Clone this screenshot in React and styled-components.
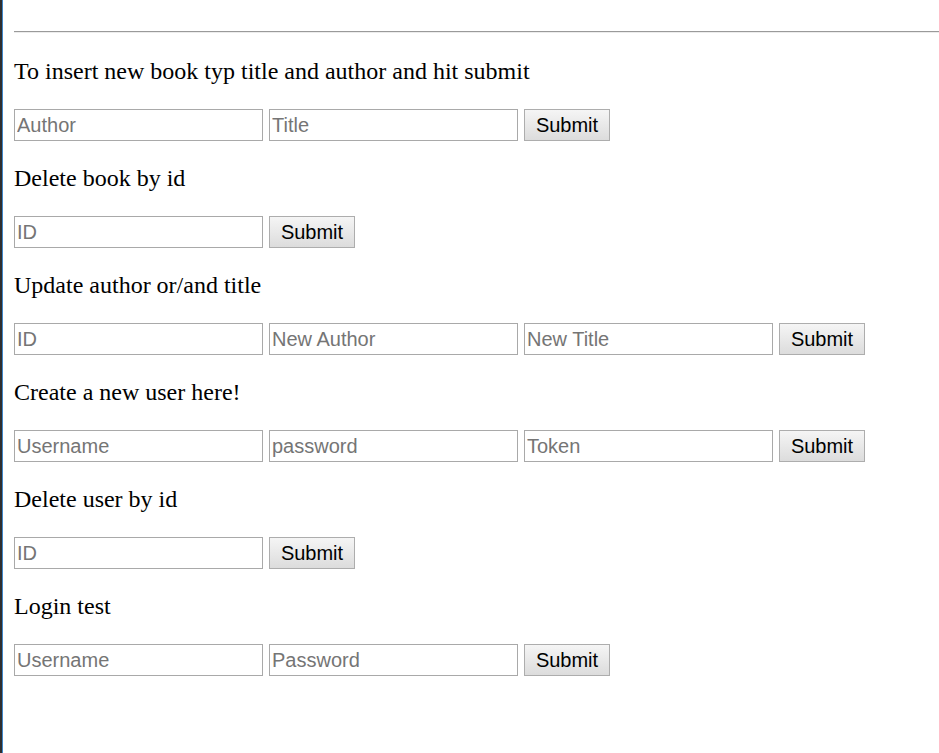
import React from 'react'
import styled, { createGlobalStyle } from 'styled-components'

const GlobalStyle = createGlobalStyle`
    html, body {
        margin: 0;
        padding: 0;
        background: #ffffff;
    }
    body {
        font-family: "Liberation Serif", "Times New Roman", serif;
    }
`

const Page = styled.div`
    min-height: 100vh;
    box-sizing: border-box;
    padding: 31px 0 0 14px;
    box-shadow: inset 2px 0 0 #2e2e30, inset 3px 0 0 #3f86c8;
`

const Rule = styled.hr`
    margin: 0;
    height: 0;
    border: none;
    border-top: 1px solid #9a9a9a;
    border-bottom: 1px solid #ececec;
`

const Forms = styled.div`
    display: flex;
    flex-direction: column;
    padding-top: 26px;
`

const Heading = styled.p`
    margin: 0;
    font-size: 24px;
    line-height: 24px;
    color: #000;
`

const Row = styled.div`
    display: flex;
    gap: 6px;
    margin: 26px 0 25px;
`

const Field = styled.input`
    box-sizing: border-box;
    width: 249px;
    height: 32px;
    margin: 0;
    padding: 0 2px;
    border: 1px solid #a9a9a9;
    border-radius: 0;
    font-family: "Liberation Sans", Arial, sans-serif;
    font-size: 20px;
    color: #000;
    background: #fff;
    outline: none;

    &::placeholder {
        color: #757575;
    }
`

const SubmitButton = styled.button`
    box-sizing: border-box;
    width: 86px;
    height: 32px;
    margin: 0;
    padding: 0;
    border: 1px solid #adadad;
    border-radius: 0;
    font-family: "Liberation Sans", Arial, sans-serif;
    font-size: 20px;
    color: #000;
    background: linear-gradient(#f5f5f5, #dcdcdc);
`

const sections = [
    { title: 'To insert new book typ title and author and hit submit', fields: ['Author', 'Title'] },
    { title: 'Delete book by id', fields: ['ID'] },
    { title: 'Update author or/and title', fields: ['ID', 'New Author', 'New Title'] },
    { title: 'Create a new user here!', fields: ['Username', 'password', 'Token'] },
    { title: 'Delete user by id', fields: ['ID'] },
    { title: 'Login test', fields: ['Username', 'Password'] },
]

function App () {
    return (
        <Page>
            <GlobalStyle />
            <Rule />
            <Forms>
                {sections.map((section) => (
                    <div key={section.title}>
                        <Heading>{section.title}</Heading>
                        <Row>
                            {section.fields.map((name, i) => (
                                <Field key={i} type="text" placeholder={name} />
                            ))}
                            <SubmitButton type="button">Submit</SubmitButton>
                        </Row>
                    </div>
                ))}
            </Forms>
        </Page>
    )
}

export default App
